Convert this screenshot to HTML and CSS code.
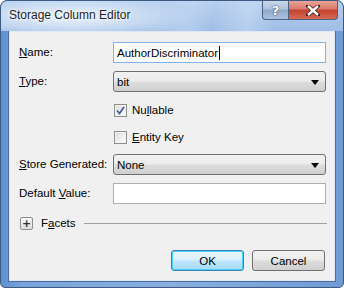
FILE: index.html
```html
<!DOCTYPE html>
<html lang="en">
<head>
  <meta charset="UTF-8" />
  <title>Storage Column Editor</title>
  <link rel="stylesheet" href="styles.css">
</head>
<body>
  <div class="window">
    <div class="titlebar">
      <span class="title">Storage Column Editor</span>
      <div class="caption-buttons">
        <span class="cap-btn help">?</span>
        <span class="cap-btn close">
          <svg width="14" height="11" viewBox="0 0 14 11"><path d="M2 1 L12 10 M12 1 L2 10" stroke="#4a1a14" stroke-width="4" stroke-linecap="square"/><path d="M2 1 L12 10 M12 1 L2 10" stroke="#fff" stroke-width="2.4"/></svg>
        </span>
      </div>
    </div>
    <div class="client">
      <div class="form">
        <label class="lbl"><u>N</u>ame:</label>
        <div class="textbox focused"><span>AuthorDiscriminator</span><span class="caret"></span></div>

        <label class="lbl"><u>T</u>ype:</label>
        <div class="combo"><span>bit</span><span class="arrow"></span></div>

        <span></span>
        <div class="check-row"><span class="check checked">
          <svg width="9" height="9" viewBox="0 0 9 9"><path d="M1 4.5 L3.5 7.5 L8 1" fill="none" stroke="#4a5fa8" stroke-width="1.8"/></svg>
        </span><span>Nu<u>l</u>lable</span></div>

        <span></span>
        <div class="check-row"><span class="check"></span><span><u>E</u>ntity Key</span></div>

        <label class="lbl"><u>S</u>tore Generated:</label>
        <div class="combo"><span>None</span><span class="arrow"></span></div>

        <label class="lbl">Default <u>V</u>alue:</label>
        <div class="textbox"></div>
      </div>

      <div class="facets">
        <span class="expander">+</span>
        <span class="facets-label">F<u>a</u>cets</span>
        <span class="rule"></span>
      </div>

      <div class="buttons">
        <button class="btn default">OK</button>
        <button class="btn">Cancel</button>
      </div>
    </div>
  </div>
</body>
</html>
```

FILE: styles.css
```css
html, body {
  margin: 0;
  padding: 0;
}

body {
  width: 344px;
  height: 288px;
  font-family: "Liberation Sans", Arial, sans-serif;
  font-size: 11.5px;
  color: #000;
  background: #fff;
}

.window {
  box-sizing: border-box;
  width: 344px;
  height: 288px;
  border: 1px solid #3c5a82;
  border-radius: 7px 7px 5px 5px;
  background: linear-gradient(90deg, #5f8fcf 0%, #79a3da 6%, #89afe0 50%, #6f9ad4 100%);
  display: flex;
  flex-direction: column;
  padding: 0 7px 5px 7px;
  overflow: hidden;
  position: relative;
}

.window::before {
  content: '';
  position: absolute;
  top: 0;
  left: 0;
  right: 0;
  height: 30px;
  background:
    radial-gradient(ellipse 120px 22px at 70px 16px, rgba(235, 243, 252, 0.95) 0%, rgba(220, 233, 248, 0.6) 60%, transparent 100%),
    linear-gradient(100deg, transparent 40%, rgba(200, 220, 245, 0.5) 55%, transparent 62%, rgba(210, 226, 246, 0.45) 72%, transparent 80%),
    linear-gradient(180deg, #b7cfee 0%, #9fbde6 100%);
  border-radius: 6px 6px 0 0;
}

.titlebar {
  height: 29px;
  display: flex;
  align-items: flex-start;
  justify-content: space-between;
  position: relative;
}

.title {
  margin-top: 7px;
  margin-left: 1px;
  font-size: 12px;
  color: #1e1e1e;
  text-shadow: 0 0 6px #fff, 0 0 3px #fff;
}

.caption-buttons {
  display: flex;
  margin-right: -2px;
}

.cap-btn {
  box-sizing: border-box;
  height: 19px;
  display: flex;
  align-items: center;
  justify-content: center;
  border: 1px solid #4b6283;
  border-top: none;
}

.help {
  width: 27px;
  border-radius: 0 0 0 4px;
  background: linear-gradient(180deg, #c8d7ea 0%, #aec3de 45%, #8ea9cc 50%, #a9c1df 100%);
  color: #fff;
  font-family: "DejaVu Sans", sans-serif;
  font-weight: bold;
  font-size: 13px;
  text-shadow: 0 0 2px #3d4f6a, 0 0 1px #3d4f6a;
}

.close {
  width: 49px;
  border-left: none;
  border-radius: 0 0 4px 0;
  background: linear-gradient(180deg, #e8a597 0%, #d9796a 45%, #c4412f 50%, #d66a55 100%);
}

.client {
  flex: 1;
  box-sizing: border-box;
  background: #f0f0f0;
  border: 1px solid #4a6d9c;
  box-shadow: inset 0 0 0 1px #dfe8f3;
  display: flex;
  flex-direction: column;
  padding: 11px 10px 10px 10px;
}

.form {
  display: grid;
  grid-template-columns: 94px 213px;
  grid-auto-rows: auto;
  row-gap: 8px;
  align-items: center;
}

.lbl {
  padding-bottom: 2px;
  white-space: nowrap;
}

.textbox {
  box-sizing: border-box;
  height: 21px;
  border: 1px solid #abadb3;
  background: #fff;
  padding: 1px 3px;
  display: flex;
  align-items: center;
}

.textbox.focused {
  border-color: #7eb4ea;
}

.caret {
  width: 1px;
  height: 14px;
  background: #000;
  margin-left: 1px;
}

.combo {
  box-sizing: border-box;
  height: 21px;
  border: 1px solid #707070;
  border-radius: 3px;
  background: linear-gradient(180deg, #f2f2f2 0%, #ebebeb 48%, #dddddd 52%, #cfcfcf 100%);
  padding: 0 3px;
  display: flex;
  align-items: center;
  justify-content: space-between;
}

.arrow {
  width: 0;
  height: 0;
  border-left: 4px solid transparent;
  border-right: 4px solid transparent;
  border-top: 5px solid #000;
  margin-right: 3px;
  margin-top: 1px;
}

.check-row {
  display: flex;
  align-items: center;
  gap: 5px;
  height: 14px;
  margin: 3px 0 2px 1px;
}

.check {
  box-sizing: border-box;
  width: 13px;
  height: 13px;
  border: 1px solid #8e8f8f;
  background: linear-gradient(135deg, #d9d9d9 0%, #f2f2f2 60%, #fbfbfb 100%);
  box-shadow: inset 0 0 0 1px #f4f4f4;
  display: flex;
  align-items: center;
  justify-content: center;
}

.facets {
  display: flex;
  align-items: center;
  margin-top: 11px;
  margin-left: 1px;
  height: 16px;
}

.expander {
  box-sizing: border-box;
  width: 13px;
  height: 13px;
  border: 1px solid #8e8f8f;
  border-radius: 2px;
  background: linear-gradient(180deg, #fbfbfb, #dcdcdc);
  display: flex;
  align-items: center;
  justify-content: center;
  font-family: "DejaVu Sans", sans-serif;
  font-size: 11px;
  font-weight: bold;
  line-height: 1;
  color: #333;
}

.facets-label {
  margin-left: 8px;
}

.rule {
  flex: 1;
  height: 1px;
  background: #a0a0a0;
  margin-left: 8px;
  margin-right: -2px;
}

.buttons {
  margin-top: auto;
  display: flex;
  justify-content: flex-end;
  gap: 8px;
}

.btn {
  box-sizing: border-box;
  width: 73px;
  height: 21px;
  border: 1px solid #707070;
  border-radius: 3px;
  background: linear-gradient(180deg, #f2f2f2 0%, #ebebeb 48%, #dddddd 52%, #cfcfcf 100%);
  font-family: inherit;
  font-size: 11.5px;
  color: #000;
  padding: 0;
}

.btn.default {
  border-color: #3c7fb1;
  box-shadow: inset 0 0 0 1px #48d3fb;
  background: linear-gradient(180deg, #eaf6fd 0%, #d9f0fc 48%, #bee6fd 52%, #a7d9f5 100%);
}
```
